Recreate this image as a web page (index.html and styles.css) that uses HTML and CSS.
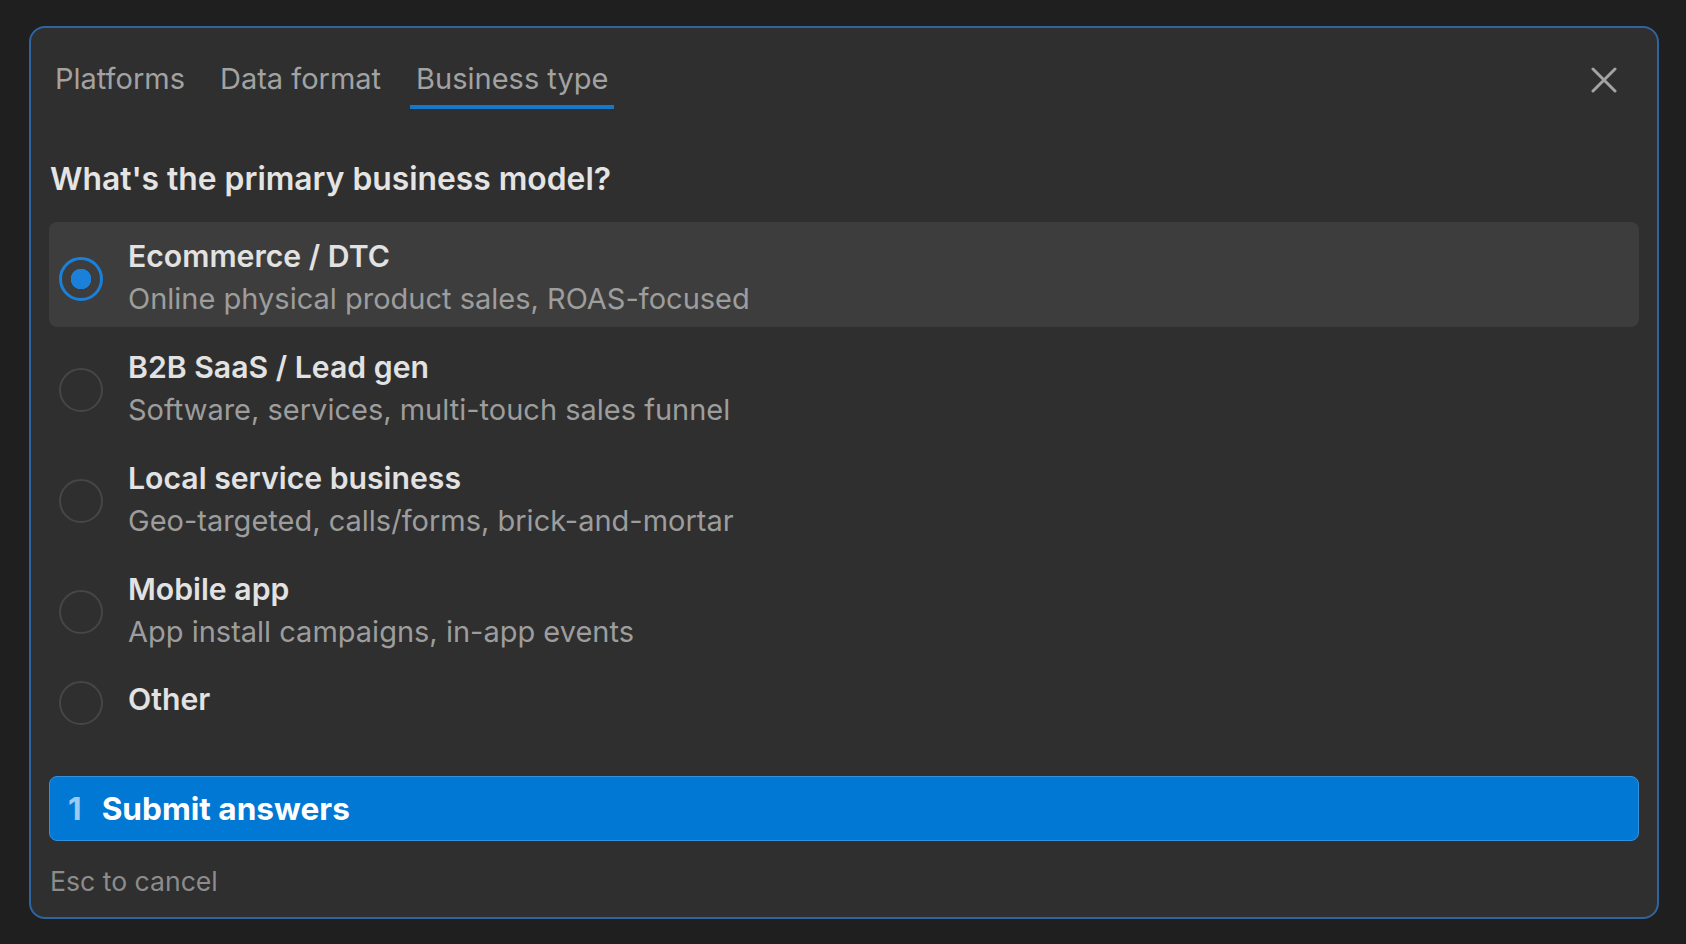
FILE: index.html
```html
<!DOCTYPE html>
<html lang="en">
<head>
    <meta charset="UTF-8">
    <meta name="viewport" content="width=device-width, initial-scale=1.0">
    <title>Business type</title>
    <link rel="stylesheet" href="styles.css">
</head>
<body>
    <div class="panel">
        <div class="tabbar">
            <div class="tabs">
                <span class="tab">Platforms</span>
                <span class="tab">Data format</span>
                <span class="tab active">Business type</span>
            </div>
            <button class="close" aria-label="Close">
                <svg width="26" height="26" viewBox="0 0 26 26">
                    <path d="M2 2 L24 24 M24 2 L2 24" stroke="#a3a3a3" stroke-width="3" stroke-linecap="round" fill="none"/>
                </svg>
            </button>
        </div>

        <h2 class="question">What's the primary business model?</h2>

        <div class="options">
            <div class="option selected">
                <span class="radio"></span>
                <div class="option-text">
                    <div class="option-title">Ecommerce / DTC</div>
                    <div class="option-desc">Online physical product sales, ROAS-focused</div>
                </div>
            </div>
            <div class="option">
                <span class="radio"></span>
                <div class="option-text">
                    <div class="option-title">B2B SaaS / Lead gen</div>
                    <div class="option-desc">Software, services, multi-touch sales funnel</div>
                </div>
            </div>
            <div class="option">
                <span class="radio"></span>
                <div class="option-text">
                    <div class="option-title">Local service business</div>
                    <div class="option-desc">Geo-targeted, calls/forms, brick-and-mortar</div>
                </div>
            </div>
            <div class="option">
                <span class="radio"></span>
                <div class="option-text">
                    <div class="option-title">Mobile app</div>
                    <div class="option-desc">App install campaigns, in-app events</div>
                </div>
            </div>
            <div class="option single">
                <span class="radio"></span>
                <div class="option-text">
                    <div class="option-title">Other</div>
                </div>
            </div>
        </div>

        <button class="submit"><span class="key">1</span>Submit answers</button>

        <div class="hint">Esc to cancel</div>
    </div>
</body>
</html>
```

FILE: styles.css
```css
html, body {
    margin: 0;
    padding: 0;
    background: #1f1f1f;
}
body {
    font-family: Inter, "Noto Sans", sans-serif;
    padding: 26px 27px 25px 29px;
    box-sizing: border-box;
    height: 944px;
}
.panel {
    height: 893px;
    box-sizing: border-box;
    background: #2f2f2f;
    border: 2px solid #2e65a1;
    border-radius: 16px;
    padding: 30px 18px 0 18px;
}
.tabbar {
    display: flex;
    justify-content: space-between;
    align-items: flex-start;
}
.tabs {
    display: flex;
    gap: 23px;
}
.tab {
    font-size: 29px;
    line-height: 40px;
    color: #a2a2a2;
    padding: 1px 6px 6px;
    border-bottom: 4px solid transparent;
}
.tab.active {
    border-bottom-color: #1478cc;
}
.close {
    background: none;
    border: none;
    padding: 0;
    margin: 9px 22px 0 0;
    width: 26px;
    height: 26px;
    cursor: pointer;
}
.close svg {
    display: block;
}
.question {
    margin: 50px 0 0 1px;
    font-size: 31.8px;
    line-height: 40px;
    font-weight: 600;
    color: #e4e4e4;
}
.options {
    margin-top: 23px;
    display: flex;
    flex-direction: column;
    gap: 6px;
}
.option {
    display: flex;
    align-items: center;
    gap: 25px;
    padding: 13px 10px 7px;
    border-radius: 8px;
}
.option.single {
    padding-top: 8px;
}
.option.selected {
    background: #3d3d3d;
}
.radio {
    width: 44px;
    height: 44px;
    box-sizing: border-box;
    border-radius: 50%;
    border: 2px solid #464646;
    flex-shrink: 0;
    margin-top: 2px;
}
.option.single .radio {
    margin-top: 7px;
}
.option.selected .radio {
    border: 3px solid #1a80d9;
    background: radial-gradient(circle, #1a80d9 0 10px, transparent 10.5px);
}
.option-title {
    font-size: 30.2px;
    line-height: 43px;
    font-weight: 600;
    color: #e2e2e2;
}
.option-desc {
    font-size: 29px;
    line-height: 42px;
    color: #9d9d9d;
}
.submit {
    margin-top: 44px;
    width: 100%;
    height: 65px;
    box-sizing: border-box;
    display: flex;
    align-items: center;
    gap: 20px;
    padding: 0 18px;
    background: #0078d4;
    border: 1px solid #3391e0;
    border-radius: 8px;
    color: #ffffff;
    font-family: Inter, "Noto Sans", sans-serif;
    font-size: 31.6px;
    font-weight: 700;
    cursor: pointer;
}
.submit .key {
    color: #9ccaf3;
}
.hint {
    margin: 22px 0 0 1px;
    font-size: 26.6px;
    line-height: 36px;
    color: #8c8c8c;
}
```
